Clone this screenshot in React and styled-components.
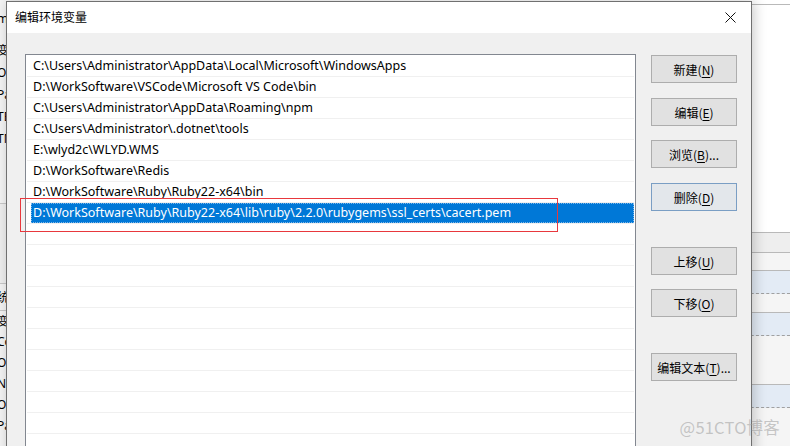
import React from "react";
import styled, { createGlobalStyle } from "styled-components";

const GlobalStyle = createGlobalStyle`
  html, body { margin: 0; padding: 0; background: #ffffff; overflow: hidden; }
  * { box-sizing: border-box; }
`;

const FONT = `"Segoe UI", "Noto Sans", "Noto Sans CJK SC", sans-serif`;

const Desktop = styled.div`
  position: relative;
  width: 790px;
  height: 446px;
  overflow: hidden;
  background: #ffffff;
  font-family: ${FONT};
`;

/* ---------- background window ---------- */
const BackWindow = styled.div`
  position: absolute;
  inset: 0;
  display: flex;
  justify-content: space-between;
`;

const BackLeft = styled.div`
  width: 40px;
  background: #f4f4f4;
  display: flex;
  flex-direction: column;
  font-size: 12px;
  color: #000;
`;

const BackText = styled.div`
  height: ${(p) => p.$h || 21}px;
  flex: none;
  line-height: ${(p) => p.$h || 21}px;
  margin-left: -3px;
  white-space: nowrap;
  background: ${(p) => p.$bg || "transparent"};
  border-top: ${(p) => (p.$line ? "1px solid #c8c8c8" : "none")};
`;

const BackRight = styled.div`
  width: 60px;
  display: flex;
  flex-direction: column;
  background: #ffffff;
`;

const BackRow = styled.div`
  height: ${(p) => p.$h}px;
  flex: none;
  background: ${(p) => p.$bg || "transparent"};
  border-top: ${(p) => (p.$line ? "1px solid #b9b9b9" : "none")};
  border-bottom: ${(p) => (p.$dash ? "1px dashed #a0a0a0" : "none")};
`;

/* ---------- dialog ---------- */
const Dialog = styled.div`
  position: absolute;
  left: 6px;
  top: 1px;
  width: 746px;
  height: 470px;
  border: 1px solid #707070;
  background: #f0f0f0;
  box-shadow: 2px 0 12px rgba(0, 0, 0, 0.22);
  display: flex;
  flex-direction: column;
`;

const TitleBar = styled.div`
  height: 31px;
  flex: none;
  background: #ffffff;
  display: flex;
  align-items: center;
  justify-content: space-between;
  padding-left: 8px;
  padding-right: 9px;
`;

const Title = styled.span`
  font-family: "Noto Sans CJK SC", sans-serif;
  font-size: 12px;
  color: #000;
  line-height: 16px;
  margin-top: -1px;
`;

const CloseButton = styled.div`
  width: 24px;
  height: 24px;
  display: flex;
  align-items: center;
  justify-content: center;
`;

const Body = styled.div`
  flex: 1;
  display: flex;
  align-items: flex-start;
  padding: 21px 0 0 18px;
`;

const ListBox = styled.div`
  width: 611px;
  height: 420px;
  flex: none;
  border: 1px solid #828790;
  background: #ffffff;
  padding-top: 1px;
  display: flex;
  flex-direction: column;
`;

const Row = styled.div`
  height: 21px;
  flex: none;
  margin: 0 1px;
  border-bottom: 1px solid #f0f0f0;
  display: flex;
`;

const Cell = styled.div`
  margin-left: 4px;
  padding-left: 2px;
  flex: 1;
  height: 20px;
  line-height: 20px;
  font-size: 12.5px;
  white-space: nowrap;
  color: ${(p) => (p.$selected ? "#ffffff" : "#000000")};
  background: ${(p) => (p.$selected ? "#0078d7" : "transparent")};
  outline: ${(p) => (p.$selected ? "1px dotted #7fb9ea" : "none")};
  outline-offset: -1px;
`;

const ButtonColumn = styled.div`
  display: flex;
  flex-direction: column;
  margin-left: 15px;
`;

const Button = styled.div`
  width: 86px;
  height: 28px;
  flex: none;
  margin-top: ${(p) => p.$mt}px;
  border: 1px solid ${(p) => (p.$focused ? "#7a9ec4" : "#adadad")};
  background: ${(p) => (p.$focused ? "#e3e7eb" : "#e1e1e1")};
  display: flex;
  align-items: center;
  justify-content: center;
  font-family: "Noto Sans CJK SC", sans-serif;
  font-size: 12px;
  color: #000;
  white-space: nowrap;
`;

const Key = styled.span`
  text-decoration: underline;
  text-underline-offset: 2px;
`;

/* ---------- overlays ---------- */
const Highlight = styled.div`
  position: absolute;
  left: 20px;
  top: 198px;
  width: 538px;
  height: 34px;
  border: 1px solid #e8383d;
  pointer-events: none;
`;

const Watermark = styled.div`
  position: absolute;
  right: 10px;
  bottom: 7px;
  font-family: "Noto Sans CJK SC", sans-serif;
  font-size: 16.5px;
  color: rgba(150, 150, 150, 0.5);
  letter-spacing: 0.2px;
`;

const paths = [
  "C:\\Users\\Administrator\\AppData\\Local\\Microsoft\\WindowsApps",
  "D:\\WorkSoftware\\VSCode\\Microsoft VS Code\\bin",
  "C:\\Users\\Administrator\\AppData\\Roaming\\npm",
  "C:\\Users\\Administrator\\.dotnet\\tools",
  "E:\\wlyd2c\\WLYD.WMS",
  "D:\\WorkSoftware\\Redis",
  "D:\\WorkSoftware\\Ruby\\Ruby22-x64\\bin",
  "D:\\WorkSoftware\\Ruby\\Ruby22-x64\\lib\\ruby\\2.2.0\\rubygems\\ssl_certs\\cacert.pem",
];
const SELECTED = 7;
const EMPTY_ROWS = 12;

const buttons = [
  { label: "新建", key: "N", mt: 1 },
  { label: "编辑", key: "E", mt: 15 },
  { label: "浏览", key: "B", suffix: "...", mt: 14 },
  { label: "删除", key: "D", mt: 15, focused: true },
  { label: "上移", key: "U", mt: 36 },
  { label: "下移", key: "O", mt: 14 },
  { label: "编辑文本", key: "T", suffix: "...", mt: 36 },
];

const leftTop = ["变", "O", "Pa", "TE", "TM"];
const leftBottom = ["变", "Co", "Or", "NU", "OS", "Pa"];

export default function App() {
  return (
    <>
      <GlobalStyle />
      <Desktop>
        <BackWindow>
          <BackLeft>
            <BackText $h={8} />
            <BackText $h={21}>m</BackText>
            <BackText $h={11} />
            {leftTop.map((t, i) => (
              <BackText key={i} $h={22}>{t}</BackText>
            ))}
            <BackText $h={53} />
            <BackText $h={80} $line $bg="#efefef" />
            <BackText $h={27} $line>统</BackText>
            {leftBottom.map((t, i) => (
              <BackText key={i} $line={i === 0}>{t}</BackText>
            ))}
          </BackLeft>
          <BackRight>
            <BackRow $h={4} />
            <BackRow $h={228} $line />
            <BackRow $h={20} $line $bg="#eeeeee" />
            <BackRow $h={18} $line $bg="#f5f5f5" />
            <BackRow $h={24} $line $bg="#e3ebf5" $dash />
            <BackRow $h={18} $bg="#f5f5f5" />
            <BackRow $h={24} $line $bg="#e3ebf5" $dash />
            <BackRow $h={48} $bg="#f5f5f5" />
            <BackRow $h={24} $line $bg="#e3ebf5" $dash />
            <BackRow $h={40} $bg="#f5f5f5" />
          </BackRight>
        </BackWindow>

        <Dialog>
          <TitleBar>
            <Title>编辑环境变量</Title>
            <CloseButton>
              <svg width="11" height="11" viewBox="0 0 11 11">
                <path d="M0.5 0.5 L10.5 10.5 M10.5 0.5 L0.5 10.5" stroke="#111" strokeWidth="1" fill="none" />
              </svg>
            </CloseButton>
          </TitleBar>
          <Body>
            <ListBox>
              {paths.map((p, i) => (
                <Row key={i}>
                  <Cell $selected={i === SELECTED}>{p}</Cell>
                </Row>
              ))}
              {Array.from({ length: EMPTY_ROWS }).map((_, i) => (
                <Row key={`e${i}`}>
                  <Cell />
                </Row>
              ))}
            </ListBox>
            <ButtonColumn>
              {buttons.map((b) => (
                <Button key={b.key} $mt={b.mt} $focused={b.focused}>
                  {b.label}(<Key>{b.key}</Key>){b.suffix || ""}
                </Button>
              ))}
            </ButtonColumn>
          </Body>
        </Dialog>

        <Highlight />
        <Watermark>@51CTO博客</Watermark>
      </Desktop>
    </>
  );
}
